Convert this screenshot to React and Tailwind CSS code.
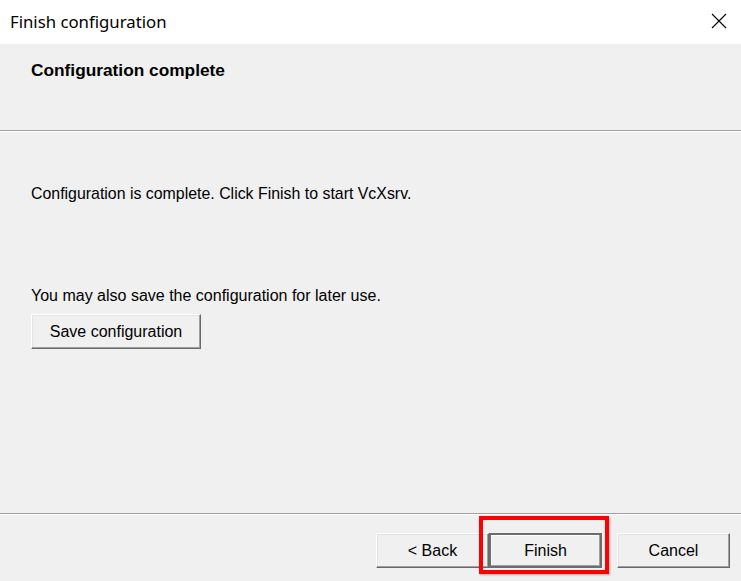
import React from "react";

const btn3d =
  "h-[35px] w-[113px] bg-[#f0f0f0] border border-t-white border-l-white border-r-[#696969] border-b-[#696969] shadow-[inset_-1px_-1px_#a0a0a0,inset_1px_1px_#e3e3e3] text-[16px] text-black flex items-center justify-center";

export default function App() {
  return (
    <div
      className="w-[741px] h-[581px] bg-[#f0f0f0] flex flex-col overflow-hidden text-black"
      style={{ fontFamily: '"Liberation Sans", Arial, sans-serif' }}
    >
      {/* title bar */}
      <div className="h-[44px] bg-white flex items-center justify-between pl-[10px] pr-[14px]">
        <span className="text-[16.75px] font-['Noto_Sans',sans-serif] mt-[-1px]">Finish configuration</span>
        <svg width="16" height="16" viewBox="0 0 16 16" className="mt-[-2px]">
          <path d="M1 1 L15 15 M15 1 L1 15" stroke="#000" strokeWidth="1.1" fill="none" />
        </svg>
      </div>

      {/* header */}
      <div className="h-[86px] px-[31px] pt-[17px]">
        <div className="font-bold text-[17.3px] leading-[18px]">Configuration complete</div>
      </div>
      <div className="h-px bg-[#a0a0a0]" />
      <div className="h-px bg-white" />

      {/* body */}
      <div className="flex-1 px-[31px]">
        <p className="mt-[53px] text-[15.9px] leading-[18px]">
          Configuration is complete. Click Finish to start VcXsrv.
        </p>
        <p className="mt-[84px] text-[16px] leading-[18px]">
          You may also save the configuration for later use.
        </p>
        <button className={btn3d + " !w-[170px] mt-[9px]"}>Save configuration</button>
      </div>
      <div className="h-px bg-[#a0a0a0]" />
      <div className="h-px bg-white" />

      {/* footer */}
      <div className="h-[66px] flex items-start pt-[18px] pl-[376px]">
        <button className={btn3d}>&lt; Back</button>
        <div className="relative">
          <button className="h-[35px] w-[113px] bg-[#f0f0f0] border-2 border-[#6d6d6d] shadow-[inset_-1px_-1px_#a0a0a0,inset_1px_1px_#ffffff] text-[16px] flex items-center justify-center">
            Finish
          </button>
          <div className="absolute left-[-10px] top-[-17px] right-[-7px] bottom-[-6px] border-4 border-[#ff0000] shadow-[1px_1px_2px_rgba(0,0,0,0.3)]" />
        </div>
        <button className={btn3d + " ml-[15px]"}>Cancel</button>
      </div>
    </div>
  );
}
